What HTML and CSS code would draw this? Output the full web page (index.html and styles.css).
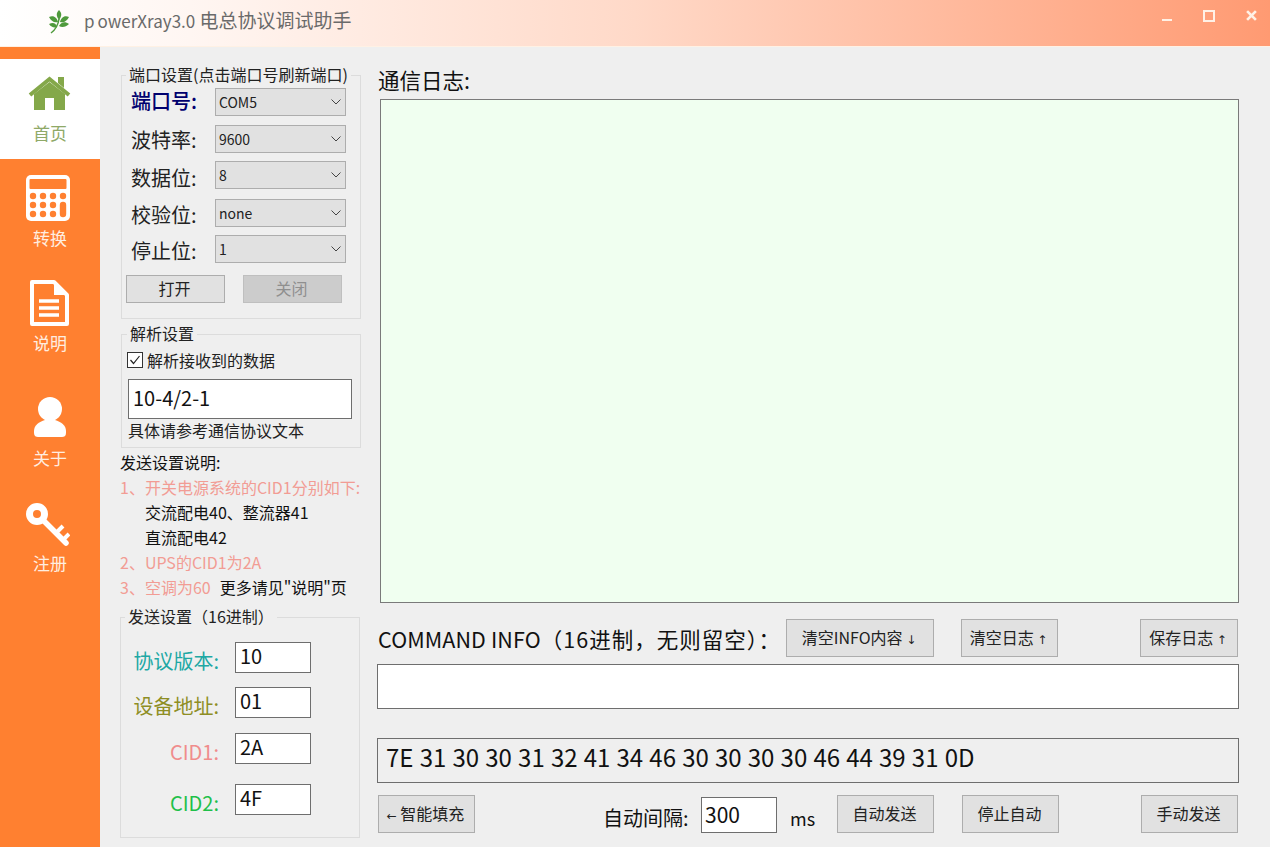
FILE: index.html
```html
<!DOCTYPE html>
<html lang="zh-CN">
<head>
    <meta charset="UTF-8">
    <title>powerXray3.0 电总协议调试助手</title>
    <link rel="stylesheet" href="styles.css">
</head>
<body>
    <header class="titlebar">
        <svg class="logo" viewBox="0 0 20 24">
            <path d="M2 23 C6 20 9 16 10 9" fill="none" stroke="#4f9a3c" stroke-width="1.500"/>
            <path d="M10 10 C7 6 7 3 10 0 C13 3 13 6 10 10Z" fill="#4f9a3c"/>
            <path d="M9 12 C5 13 2 11 0 7 C5 5 8 8 9 12Z" fill="#4f9a3c"/>
            <path d="M11 12 C15 13 18 11 20 7 C15 5 12 8 11 12Z" fill="#4f9a3c"/>
            <path d="M8 17 C5 18 2 17 0 14 C4 12 7 13 8 17Z" fill="#4f9a3c"/>
            <path d="M10 16 C13 18 17 17 20 14 C16 11 12 12 10 16Z" fill="#4f9a3c"/>
        </svg>
        <span class="app-title"><span class="title-latin"><span class="first-letter">p</span>owerXray3.0</span> 电总协议调试助手</span>
        <div class="win-buttons">
            <span class="win-min"></span>
            <span class="win-max"></span>
            <svg class="win-close" viewBox="0 0 10 10"><path d="M1 1 L9 9 M9 1 L1 9" stroke="#fff1e6" stroke-width="2.400"/></svg>
        </div>
    </header>

    <div class="app">
        <nav class="sidebar">
            <div class="nav-item active">
                <svg class="nav-icon" viewBox="0 0 44 46">
                    <path d="M2 25 L21.500 9 L41 25" fill="none" stroke="#84a84a" stroke-width="4"/>
                    <path d="M30 7 H36 V18 L30 13Z" fill="#84a84a"/>
                    <path d="M6 24 L21.500 12 L37 24 V40 H26 V28 H17 V40 H6Z" fill="#84a84a"/>
                </svg>
                <span>首页</span>
            </div>
            <div class="nav-item">
                <svg class="nav-icon nav-icon-left" viewBox="0 0 44 46">
                    <rect width="44" height="46" rx="5" fill="#fff"/>
                    <rect x="3.500" y="4" width="37" height="10" rx="1" fill="#ff8030"/>
                    <g fill="#ff8030">
                        <circle cx="7" cy="21" r="3.200"/><circle cx="17" cy="21" r="3.200"/><circle cx="27" cy="21" r="3.200"/><circle cx="37" cy="21" r="3.200"/>
                        <circle cx="7" cy="30" r="3.200"/><circle cx="17" cy="30" r="3.200"/><circle cx="27" cy="30" r="3.200"/>
                        <circle cx="7" cy="39" r="3.200"/><circle cx="17" cy="39" r="3.200"/><circle cx="27" cy="39" r="3.200"/>
                        <rect x="33.800" y="26.800" width="6.400" height="15.400" rx="3.200"/>
                    </g>
                </svg>
                <span>转换</span>
            </div>
            <div class="nav-item">
                <svg class="nav-icon" viewBox="0 0 44 46">
                    <path d="M4 2 H26 L39 15 V44 H4Z" fill="none" stroke="#fff" stroke-width="4" stroke-linejoin="round"/>
                    <path d="M26 2 V15 H39Z" fill="#fff"/>
                    <path d="M11 21 H31 M11 28 H31 M11 35 H31" stroke="#fff" stroke-width="3.500"/>
                </svg>
                <span>说明</span>
            </div>
            <div class="nav-item nav-gap">
                <svg class="nav-icon" viewBox="0 0 44 46">
                    <circle cx="22" cy="14" r="12" fill="#fff"/>
                    <path d="M17 25 H27 C33 27 38 30 38 36 V38 C38 41 36 42 34 42 H10 C8 42 6 41 6 38 V36 C6 30 11 27 17 25Z" fill="#fff"/>
                </svg>
                <span>关于</span>
            </div>
            <div class="nav-item">
                <svg class="nav-icon nav-icon-left" viewBox="0 0 44 46">
                    <circle cx="11" cy="14" r="7.500" fill="none" stroke="#fff" stroke-width="7"/>
                    <path d="M17 20 L40 43" stroke="#fff" stroke-width="5.500" stroke-linecap="round"/>
                    <path d="M30 33 L37 26 M37 40 L43 34" stroke="#fff" stroke-width="4"/>
                </svg>
                <span>注册</span>
            </div>
        </nav>

        <aside class="settings">
            <fieldset class="group port-group">
                <legend>端口设置(点击端口号刷新端口)</legend>
                <div class="port-row">
                    <label class="port-label port-label-strong">端口号:</label>
                    <div class="select"><span>COM5</span><svg viewBox="0 0 10 6"><path d="M0.500 0.500 L5 5 L9.500 0.500" fill="none" stroke="#444"/></svg></div>
                </div>
                <div class="port-row">
                    <label class="port-label">波特率:</label>
                    <div class="select"><span>9600</span><svg viewBox="0 0 10 6"><path d="M0.500 0.500 L5 5 L9.500 0.500" fill="none" stroke="#444"/></svg></div>
                </div>
                <div class="port-row">
                    <label class="port-label">数据位:</label>
                    <div class="select"><span>8</span><svg viewBox="0 0 10 6"><path d="M0.500 0.500 L5 5 L9.500 0.500" fill="none" stroke="#444"/></svg></div>
                </div>
                <div class="port-row">
                    <label class="port-label">校验位:</label>
                    <div class="select"><span>none</span><svg viewBox="0 0 10 6"><path d="M0.500 0.500 L5 5 L9.500 0.500" fill="none" stroke="#444"/></svg></div>
                </div>
                <div class="port-row">
                    <label class="port-label">停止位:</label>
                    <div class="select"><span>1</span><svg viewBox="0 0 10 6"><path d="M0.500 0.500 L5 5 L9.500 0.500" fill="none" stroke="#444"/></svg></div>
                </div>
                <div class="port-actions">
                    <button class="btn btn-port">打开</button>
                    <button class="btn btn-port btn-off">关闭</button>
                </div>
            </fieldset>

            <fieldset class="group parse-group">
                <legend>解析设置</legend>
                <div class="check-row">
                    <span class="checkbox"><svg viewBox="0 0 14 14"><path d="M2.500 7 L5.500 10.500 L11.500 3" fill="none" stroke="#222" stroke-width="1.200"/></svg></span>
                    <span>解析接收到的数据</span>
                </div>
                <div class="field parse-field">10-4/2-1</div>
                <div class="parse-hint">具体请参考通信协议文本</div>
            </fieldset>

            <div class="notes">
                <div>发送设置说明:</div>
                <div class="note-red">1、开关电源系统的CID1分别如下:</div>
                <div class="note-sub">交流配电40、整流器41</div>
                <div class="note-sub">直流配电42</div>
                <div class="note-red">2、UPS的CID1为2A</div>
                <div><span class="note-red">3、空调为60</span><span class="note-more">更多请见"说明"页</span></div>
            </div>

            <fieldset class="group send-group">
                <legend>发送设置（16进制）</legend>
                <div class="send-row">
                    <label class="send-label c-version">协议版本:</label>
                    <div class="field send-field">10</div>
                </div>
                <div class="send-row">
                    <label class="send-label c-address">设备地址:</label>
                    <div class="field send-field">01</div>
                </div>
                <div class="send-row">
                    <label class="send-label c-cid1">CID1:</label>
                    <div class="field send-field">2A</div>
                </div>
                <div class="send-row">
                    <label class="send-label c-cid2">CID2:</label>
                    <div class="field send-field">4F</div>
                </div>
            </fieldset>
        </aside>

        <main class="console">
            <div class="log-title">通信日志:</div>
            <div class="log-box"></div>

            <div class="command-row">
                <span class="command-label">COMMAND INFO<span class="command-hint">（16进制，无则留空）：</span></span>
                <button class="btn btn-clear-info">清空INFO内容 <span class="arrow">↓</span></button>
                <button class="btn btn-clear-log">清空日志 <span class="arrow">↑</span></button>
                <button class="btn btn-save">保存日志 <span class="arrow">↑</span></button>
            </div>
            <div class="field wide-field"></div>
            <div class="field wide-field hex-field">7E 31 30 30 31 32 41 34 46 30 30 30 30 46 44 39 31 0D</div>

            <div class="send-bar">
                <button class="btn btn-fill"><span class="arrow">←</span> 智能填充</button>
                <span class="interval-label">自动间隔:</span>
                <div class="field interval-field">300</div>
                <span class="interval-unit">ms</span>
                <button class="btn btn-auto">自动发送</button>
                <button class="btn btn-stop">停止自动</button>
                <button class="btn btn-manual">手动发送</button>
            </div>
        </main>
    </div>
</body>
</html>
```

FILE: styles.css
```css
* {
    box-sizing: border-box;
}
body {
    margin: 0;
    height: 847px;
    overflow: hidden;
    background-color: #efefef;
    color: #111;
    font-family: "Noto Sans CJK SC", "Noto Sans", sans-serif;
    font-size: 16px;
}

/* title bar */
.titlebar {
    height: 47px;
    display: flex;
    align-items: center;
    padding-left: 49px;
    background: linear-gradient(90deg, #ffffff 0%, #fff6f2 15%, #ffd9c8 50%, #ff9a72 100%);
    border-bottom: 1px solid #fff1e4;
}
.logo {
    width: 20px;
    height: 24px;
    margin-top: -2px;
}
.app-title {
    margin-left: 15px;
    margin-top: -5px;
    font-size: 19px;
    line-height: 26px;
    color: #6a6a6a;
    white-space: nowrap;
}
.title-latin {
    font-size: 17px;
}
.first-letter {
    margin-right: 3px;
}
.win-buttons {
    margin-left: auto;
    display: flex;
    align-items: flex-start;
    height: 100%;
    padding-top: 10px;
}
.win-min {
    width: 10px;
    height: 2px;
    margin-top: 9px;
    background-color: #fff1e6;
}
.win-max {
    width: 12px;
    height: 12px;
    margin-left: 31px;
    border: 2px solid #fff1e6;
}
.win-close {
    width: 11px;
    height: 11px;
    margin-left: 31px;
    margin-right: 13px;
}

/* page layout */
.app {
    display: flex;
    height: 800px;
}
.sidebar {
    width: 100px;
    flex: none;
    padding-top: 12px;
    background-color: #ff8030;
    display: flex;
    flex-direction: column;
    gap: 5px;
}
.nav-item {
    height: 100px;
    padding-top: 11px;
    display: flex;
    flex-direction: column;
    align-items: center;
    color: #ffeee0;
    font-size: 17px;
    line-height: 24px;
}
.nav-item span {
    margin-top: 5px;
}
.nav-item.active {
    background-color: #fff;
    color: #8fa968;
}
.nav-gap {
    margin-top: 10px;
}
.nav-icon {
    width: 44px;
    height: 46px;
}
.nav-icon-left {
    margin-left: -4px;
}

/* left settings column */
.settings {
    width: 241px;
    flex: none;
    margin-left: 20px;
    padding-top: 18px;
}
.group {
    margin: 0;
    border: 1px solid #dcdcdc;
    min-width: 0;
}
.group legend {
    padding: 0 3px 2px;
    font-size: 16px;
    line-height: 18px;
    color: #222;
    white-space: nowrap;
}
.port-group {
    margin-left: 1px;
    padding: 3px 4px 15px;
}
.port-row {
    display: flex;
    align-items: center;
    height: 28px;
    margin-top: 9px;
}
.port-row:first-of-type {
    margin-top: 0;
}
.port-row:nth-of-type(3) {
    margin-top: 8px;
}
.port-row:nth-of-type(4) {
    margin-top: 10px;
}
.port-row:nth-of-type(5) {
    margin-top: 8px;
}
.port-label {
    width: 84px;
    margin-left: 5px;
    font-size: 20px;
    line-height: 28px;
    color: #222;
}
.port-row:nth-of-type(2) .port-label {
    margin-top: 2px;
}
.port-row:nth-of-type(3) .port-label {
    margin-top: 6px;
}
.port-row:nth-of-type(4) .port-label,
.port-row:nth-of-type(5) .port-label {
    margin-top: 4px;
}
.port-label-strong {
    margin-bottom: 2px;
    color: #00006e;
    font-weight: 500;
}
.select {
    width: 131px;
    height: 28px;
    padding: 0 4px 0 3px;
    display: flex;
    align-items: center;
    justify-content: space-between;
    background-color: #e1e1e1;
    border: 1px solid #adadad;
    font-size: 14px;
    color: #222;
}
.select svg {
    width: 10px;
    height: 6px;
}
.port-actions {
    display: flex;
    gap: 18px;
    margin-top: 12px;
}
.btn {
    height: 38px;
    padding: 0 2px 2px 0;
    background-color: #e1e1e1;
    border: 1px solid #adadad;
    font-family: inherit;
    font-size: 16px;
    color: #222;
    white-space: nowrap;
}
.arrow {
    font-family: "DejaVu Sans", sans-serif;
    font-size: 12px;
}
.btn-port {
    width: 99px;
    height: 28px;
}
.btn-off {
    background-color: #cccccc;
    border-color: #bfbfbf;
    color: #8f8f8f;
}
.parse-group {
    margin-top: 5px;
    margin-left: 1px;
    padding: 7px 8px 6px 6px;
}
.parse-group legend {
    margin-left: -1px;
}
.check-row {
    display: flex;
    align-items: center;
    height: 18px;
    margin-left: -1px;
    line-height: 16px;
    color: #222;
}
.checkbox {
    width: 16px;
    height: 16px;
    margin-right: 4px;
    display: flex;
    background-color: #fff;
    border: 1px solid #333;
}
.field {
    background-color: #fff;
    border: 1px solid #6e6e6e;
    font-size: 21px;
    color: #111;
}
.parse-field {
    height: 40px;
    margin-top: 10px;
    padding-left: 4px;
    line-height: 36px;
    font-size: 20px;
}
.parse-hint {
    height: 20px;
    margin-top: 2px;
    line-height: 18px;
    color: #222;
}
.notes {
    margin-top: 2px;
    line-height: 25px;
}
.note-red {
    color: #f29c94;
}
.note-sub {
    padding-left: 25px;
}
.note-more {
    margin-left: 9px;
}
.send-group {
    margin-top: 7px;
    padding: 15px 4px 22px;
    width: 240px;
}
.send-row {
    display: flex;
    align-items: center;
    height: 31px;
    margin-top: 14px;
}
.send-row:first-of-type {
    margin-top: 0;
}
.send-row:nth-of-type(3) {
    margin-top: 15px;
}
.send-row:nth-of-type(4) {
    margin-top: 20px;
}
.send-label {
    width: 94px;
    text-align: right;
    font-size: 20px;
    line-height: 38px;
    margin-top: 6px;
}
.send-field {
    width: 76px;
    height: 31px;
    margin-left: 16px;
    padding-left: 4px;
    line-height: 26px;
    font-size: 20px;
}
.c-version {
    color: #20a8a4;
}
.c-address {
    color: #8e8e24;
}
.c-cid1 {
    color: #f08c8c;
}
.c-cid2 {
    color: #1fc04a;
}

/* right console column */
.console {
    width: 862px;
    flex: none;
    margin-left: 16px;
}
.log-title {
    height: 52px;
    padding: 18px 0 0 1px;
    font-size: 21.500px;
    line-height: 29px;
    color: #111;
}
.log-box {
    height: 504px;
    margin-left: 3px;
    background-color: #f0fff0;
    border: 1px solid #7a7a7a;
}
.command-row {
    display: flex;
    align-items: center;
    margin-top: 16px;
    padding: 0 1px;
}
.command-label {
    width: 408px;
    height: 38px;
    flex: none;
    font-size: 21.500px;
    line-height: 40px;
    letter-spacing: 0.100px;
    white-space: nowrap;
}
.command-hint {
    letter-spacing: 1px;
}
.btn-clear-info {
    width: 148px;
}
.btn-clear-log {
    width: 97px;
    margin-left: 27px;
}
.btn-save {
    width: 98px;
    margin-left: auto;
}
.wide-field {
    height: 45px;
    margin-top: 7px;
}
.hex-field {
    margin-top: 29px;
    padding-left: 8px;
    background-color: #efefef;
    font-size: 24px;
    line-height: 36px;
    word-spacing: 0.800px;
}
.send-bar {
    display: flex;
    align-items: flex-start;
    margin-top: 12px;
    padding: 0 1px;
}
.btn-fill {
    width: 97px;
}
.interval-label {
    width: 85px;
    height: 38px;
    margin-left: 128px;
    font-size: 20px;
    line-height: 46px;
    white-space: nowrap;
}
.interval-field {
    width: 76px;
    height: 36px;
    margin-top: 2px;
    margin-left: 13px;
    padding-left: 3px;
    line-height: 33px;
}
.interval-unit {
    width: 47px;
    height: 38px;
    margin-left: 13px;
    font-size: 18px;
    line-height: 47px;
}
.btn-auto {
    width: 97px;
}
.btn-stop {
    width: 97px;
    margin-left: 28px;
}
.btn-manual {
    width: 97px;
    margin-left: auto;
}
```
